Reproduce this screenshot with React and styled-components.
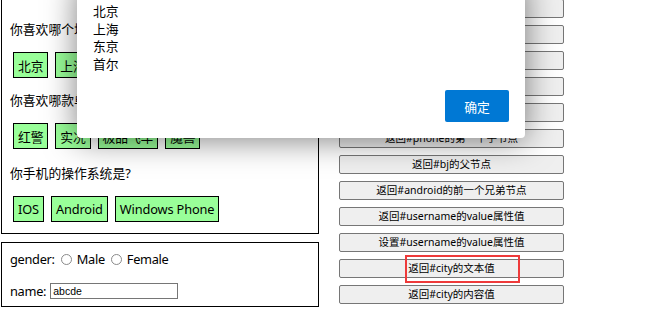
import React from 'react'
import styled, { createGlobalStyle } from 'styled-components'

const GlobalStyle = createGlobalStyle`
  html, body {
    margin: 0;
    padding: 0;
    background: #fff;
    overflow: hidden;
  }
  body {
    font-family: 'Noto Sans', 'Noto Sans CJK SC', sans-serif;
    color: #000;
  }
`

const cities = ['北京', '上海', '东京', '首尔']
const games = ['红警', '实况', '极品飞车', '魔兽']
const systems = ['IOS', 'Android', 'Windows Phone']

const actions = [
  '返回#bj节点',
  '返回所有li节点',
  '返回#city下的li节点',
  '返回#city的所有子节点',
  '返回#phone的最后一个子节点',
  '返回#phone的第一个子节点',
  '返回#bj的父节点',
  '返回#android的前一个兄弟节点',
  '返回#username的value属性值',
  '设置#username的value属性值',
  '返回#city的文本值',
  '返回#city的内容值',
]

const App = () => {
  return (
    <>
      <GlobalStyle />
      <Page>
        <LeftColumn>
          <Panel>
            <Question>你喜欢哪个城市?</Question>
            <Choices>
              {cities.map(c => <Choice key={c}>{c}</Choice>)}
            </Choices>
            <Question>你喜欢哪款单机游戏?</Question>
            <Choices>
              {games.map(g => <Choice key={g}>{g}</Choice>)}
            </Choices>
            <Question $gap={15}>你手机的操作系统是?</Question>
            <Choices>
              {systems.map(s => <Choice key={s}>{s}</Choice>)}
            </Choices>
          </Panel>

          <FormPanel>
            <FormRow>
              gender:
              <RadioDot />
              Male
              <RadioDot />
              Female
            </FormRow>
            <FormRow>
              name:
              <NameInput defaultValue="abcde" readOnly />
            </FormRow>
          </FormPanel>
        </LeftColumn>

        <RightColumn>
          {actions.map((a, i) => (
            <ActionButton key={a}>
              {a}
              {i === 10 && <Highlight />}
            </ActionButton>
          ))}
        </RightColumn>
      </Page>

      <Dialog>
        <DialogText>
          <div>北京</div>
          <div>上海</div>
          <div>东京</div>
          <div>首尔</div>
        </DialogText>
        <DialogFooter>
          <OkButton>确定</OkButton>
        </DialogFooter>
      </Dialog>
    </>
  )
}

const Page = styled.div`
  display: flex;
  align-items: flex-start;
  margin-top: -10px;
  padding-left: 1px;
`

const LeftColumn = styled.div`
  width: 318px;
  display: flex;
  flex-direction: column;
  gap: 8px;
`

const Panel = styled.div`
  border: 1px solid #000;
  padding: 16px 8px 11px;
  font-size: 12.8px;
`

const Question = styled.p`
  margin: ${p => p.$gap || 13}px 0 0;
  line-height: 18px;
  font-family: 'Noto Sans', 'Noto Sans CJK SC', sans-serif;
`

const Choices = styled.div`
  display: flex;
  gap: 7px;
  margin-top: 14px;
  padding-left: 3px;
`

const Choice = styled.button`
  height: 26px;
  padding: 0 4px;
  background: #99ff99;
  border: 1px solid #000;
  font-family: 'Noto Sans', 'Noto Sans CJK SC', sans-serif;
  font-size: 12.8px;
  letter-spacing: -0.15px;
  color: #000;
`

const FormPanel = styled.div`
  border: 1px solid #000;
  padding: 6px 8px 5px;
  font-size: 12.8px;
  letter-spacing: -0.3px;
  display: flex;
  flex-direction: column;
  gap: 12px;
`

const FormRow = styled.div`
  display: flex;
  align-items: center;
  height: 20px;
`

const RadioDot = styled.span`
  width: 9px;
  height: 9px;
  border: 1px solid #8a8a8a;
  border-radius: 50%;
  margin: 0 5px 0 6px;
`

const NameInput = styled.input`
  box-sizing: border-box;
  width: 128px;
  height: 16px;
  margin-left: 4px;
  padding: 0 2px;
  border: 1px solid #767676;
  font-family: 'Liberation Sans', Arial, sans-serif;
  font-size: 10.5px;
  letter-spacing: 0;
  outline: none;
`

const RightColumn = styled.div`
  display: flex;
  flex-direction: column;
  gap: 7px;
  margin-left: 20px;
  padding-top: 9px;
`

const ActionButton = styled.button`
  position: relative;
  width: 225px;
  height: 19px;
  padding: 0;
  background: #efefef;
  border: 1px solid #767676;
  border-radius: 2px;
  font-family: 'Noto Sans', 'Noto Sans CJK SC', sans-serif;
  font-size: 10.5px;
  line-height: 17px;
  color: #000;
`

const Highlight = styled.span`
  position: absolute;
  left: 65px;
  top: -5px;
  width: 115px;
  height: 28px;
  box-sizing: border-box;
  border: 2px solid #ee3a3a;
`

const Dialog = styled.div`
  position: absolute;
  left: 77px;
  top: -20px;
  width: 448px;
  height: 158px;
  box-sizing: border-box;
  background: #fff;
  border-radius: 4px;
  box-shadow: 0 2px 32px rgba(0, 0, 0, 0.5);
  padding: 22px 16px 16px;
  display: flex;
  flex-direction: column;
  justify-content: space-between;
  font-family: 'Noto Sans CJK SC', sans-serif;
  font-size: 12.8px;
`

const DialogText = styled.div`
  line-height: 17.7px;
`

const DialogFooter = styled.div`
  display: flex;
  justify-content: flex-end;
`

const OkButton = styled.button`
  width: 64px;
  height: 32px;
  background: #0078d4;
  color: #fff;
  border: none;
  border-radius: 2px;
  font-family: 'Noto Sans CJK SC', sans-serif;
  font-size: 12.8px;
`

export default App
